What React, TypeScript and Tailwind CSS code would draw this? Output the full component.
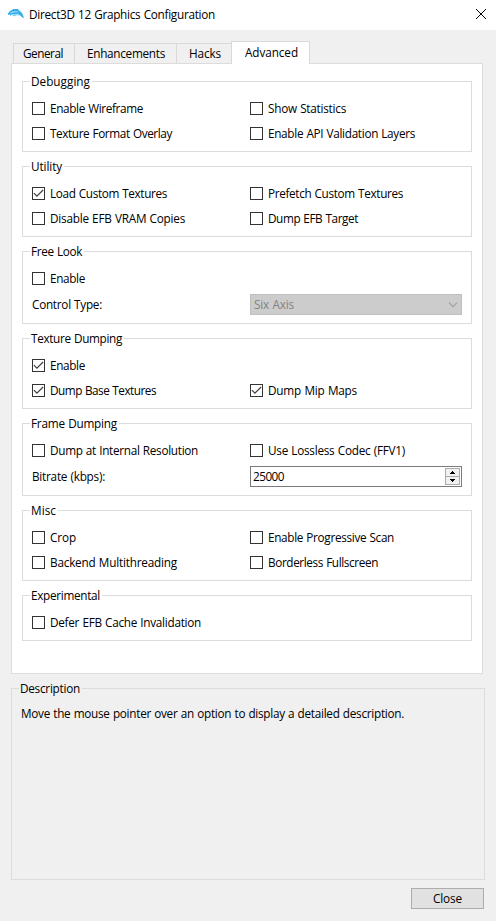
import { useLayoutEffect, useRef, useState, type ReactNode } from "react";

/* Label whose tracking is adjusted so that the line takes exactly `w` pixels. */
function Label({ text, w }: { text: string; w: number }) {
  const ref = useRef<HTMLSpanElement>(null);
  const [spacing, setSpacing] = useState(0);
  useLayoutEffect(() => {
    if (!ref.current) return;
    const natural = ref.current.getBoundingClientRect().width - spacing * text.length;
    setSpacing((w - natural) / text.length);
  }, [text, w]);
  return (
    <span ref={ref} className="inline-block justify-self-start whitespace-pre [word-spacing:0.5px]" style={{ letterSpacing: `${spacing}px` }}>
      {text}
    </span>
  );
}

function CheckItem({ text, w, checked = false }: { text: string; w: number; checked?: boolean }) {
  return (
    <label className="flex h-[17px] items-center">
      <span className="mr-[5px] flex size-[13px] shrink-0 items-center justify-center border border-[#333333] bg-white">
        {checked && (
          <svg width="11" height="11" viewBox="0 0 11 11" fill="none" stroke="#404040" strokeWidth="1.2">
            <path d="M0.9 5.2 L3.9 8.2 L10.1 2" />
          </svg>
        )}
      </span>
      <Label text={text} w={w} />
    </label>
  );
}

function Group({ title, w, height, children }: { title: string; w: number; height: string; children: ReactNode }) {
  return (
    <section className={`relative border border-[#dcdcdc] pl-[9px] pt-[18px] ${height}`}>
      <h2 className="absolute -top-[9px] left-[7px] h-[18px] bg-white pr-[2px] pl-px leading-[17px]">
        <Label text={title} w={w} />
      </h2>
      {children}
    </section>
  );
}

function Row({ children, className = "" }: { children: ReactNode; className?: string }) {
  return <div className={`grid grid-cols-[218px_212px] items-center ${className}`}>{children}</div>;
}

export default function App() {
  return (
    <div className="flex h-[921px] w-[496px] flex-col overflow-hidden bg-[#f0f0f0] font-['Open_Sans','Noto_Sans',sans-serif] text-[11.75px] leading-[17px] text-black">
      <header className="flex h-[30px] shrink-0 items-center bg-white pl-[7px]">
        <svg width="18" height="14" viewBox="0 0 18 14" className="mr-1">
          <path d="M1 5.6 C2.2 3.6 3.4 2.6 5 2.1 L6 1 L12 1 L11 1.9 C14 2.8 15.4 5 16 7.2 L17 10 L15.4 9.6 L14 8.2 C12.6 6.6 11 6 9.4 6 L8.6 7.6 L6.6 6.3 L4.6 6.6 L3.4 8 L3 6.6 L1 7 Z" fill="#36adeb" />
          <path d="M3.4 4.6 C6 2.8 10 2.6 12.4 4.4 C9.6 3.9 6.4 4.2 3.4 5.6 Z" fill="#a4defa" />
          <path d="M5 7.2 L9.2 5.6 L13 7.8 L9.4 7.2 L7 8.4 Z" fill="#8ad4f7" />
        </svg>
        <h1 className="-mt-px flex-1">
          <Label text="Direct3D 12 Graphics Configuration" w={186} />
        </h1>
        <svg width="10" height="10" viewBox="0 0 10 10" stroke="#000" strokeWidth="1" className="mr-[10px] mb-[2px]">
          <path d="M0 0 L10 10 M10 0 L0 10" />
        </svg>
      </header>

      <nav className="relative z-10 mt-[11px] -mb-px ml-[13px] flex h-[23px] shrink-0 items-end">
        <div className="mb-px flex h-5 w-[61px] border-t border-l border-[#d9d9d9] pl-[9px] leading-[19px]">
          <Label text="General" w={40} />
        </div>
        <div className="mb-px flex h-5 w-[102px] border-t border-l border-[#d9d9d9] pl-[12px] leading-[19px]">
          <Label text="Enhancements" w={78} />
        </div>
        <div className="mb-px flex h-5 w-[55px] border-t border-l border-[#d9d9d9] pl-[12px] leading-[19px]">
          <Label text="Hacks" w={32} />
        </div>
        <div className="flex h-[23px] w-[79px] border-x border-t border-[#d9d9d9] bg-white pl-[13px] leading-[21px]">
          <Label text="Advanced" w={53} />
        </div>
      </nav>

      <main className="ml-[11px] flex h-[611px] w-[472px] shrink-0 flex-col gap-[14px] border border-[#dcdcdc] bg-white px-[10px] pt-[17px]">
        <Group title="Debugging" w={59} height="h-[71px]">
          <Row>
            <CheckItem text="Enable Wireframe" w={93} />
            <CheckItem text="Show Statistics" w={78} />
          </Row>
          <Row className="mt-2">
            <CheckItem text="Texture Format Overlay" w={122} />
            <CheckItem text="Enable API Validation Layers" w={147} />
          </Row>
        </Group>
        <Group title="Utility" w={31} height="h-[71px]">
          <Row>
            <CheckItem text="Load Custom Textures" w={117} checked />
            <CheckItem text="Prefetch Custom Textures" w={135} />
          </Row>
          <Row className="mt-2">
            <CheckItem text="Disable EFB VRAM Copies" w={135} />
            <CheckItem text="Dump EFB Target" w={90} />
          </Row>
        </Group>
        <Group title="Free Look" w={51} height="h-[73px]">
          <Row>
            <CheckItem text="Enable" w={35} />
          </Row>
          <Row className="mt-[7px]">
            <Label text="Control Type:" w={70} />
            <div className="flex h-[21px] items-center justify-between border border-[#bfbfbf] bg-[#cccccc] pr-[3px] pl-[3px] text-[#838383]">
              <Label text="Six Axis" w={40} />
              <svg width="10" height="6" viewBox="0 0 10 6" fill="none" stroke="#a0a0a0" strokeWidth="1.1">
                <path d="M1 0.7 L5 4.7 L9 0.7" />
              </svg>
            </div>
          </Row>
        </Group>
        <Group title="Texture Dumping" w={91} height="h-[71px]">
          <Row>
            <CheckItem text="Enable" w={35} checked />
          </Row>
          <Row className="mt-2">
            <CheckItem text="Dump Base Textures" w={106} checked />
            <CheckItem text="Dump Mip Maps" w={89} checked />
          </Row>
        </Group>
        <Group title="Frame Dumping" w={86} height="h-[73px]">
          <Row>
            <CheckItem text="Dump at Internal Resolution" w={148} />
            <CheckItem text="Use Lossless Codec (FFV1)" w={137} />
          </Row>
          <Row className="mt-[7px]">
            <Label text="Bitrate (kbps):" w={73} />
            <div className="flex h-[21px] items-center justify-between border border-[#7a7a7a] bg-white pr-px pl-[2px]">
              <Label text="25000" w={31} />
              <div className="flex h-[17px] w-[15px] flex-col">
                <div className="flex h-[9px] items-center justify-center border border-[#acacac] bg-[#f0f0f0]">
                  <svg width="5" height="3" viewBox="0 0 5 3" shapeRendering="crispEdges">
                    <path d="M2 0h1v1h1v1h1v1H0V2h1V1h1z" />
                  </svg>
                </div>
                <div className="-mt-px flex h-[9px] items-center justify-center border border-[#acacac] bg-[#f0f0f0]">
                  <svg width="5" height="3" viewBox="0 0 5 3" shapeRendering="crispEdges">
                    <path d="M0 0h5v1H4v1H3v1H2V2H1V1H0z" />
                  </svg>
                </div>
              </div>
            </div>
          </Row>
        </Group>
        <Group title="Misc" w={25} height="h-[71px]">
          <Row>
            <CheckItem text="Crop" w={26} />
            <CheckItem text="Enable Progressive Scan" w={126} />
          </Row>
          <Row className="mt-2">
            <CheckItem text="Backend Multithreading" w={127} />
            <CheckItem text="Borderless Fullscreen" w={110} />
          </Row>
        </Group>
        <Group title="Experimental" w={69} height="h-[46px]">
          <Row>
            <CheckItem text="Defer EFB Cache Invalidation" w={151} />
          </Row>
        </Group>
      </main>

      <section className="relative mt-[14px] ml-[11px] h-[192px] w-[474px] shrink-0 border border-[#dcdcdc] pt-[16px] pl-[9px]">
        <h2 className="absolute -top-[9px] left-[7px] h-[18px] bg-[#f0f0f0] pr-[2px] pl-px leading-[17px]">
          <Label text="Description" w={60} />
        </h2>
        <Label text="Move the mouse pointer over an option to display a detailed description." w={383} />
      </section>

      <button className="mt-2 ml-[411px] h-[21px] w-[73px] shrink-0 border border-[#adadad] bg-[#e1e1e1] leading-[19px]">
        <Label text="Close" w={29} />
      </button>
    </div>
  );
}
